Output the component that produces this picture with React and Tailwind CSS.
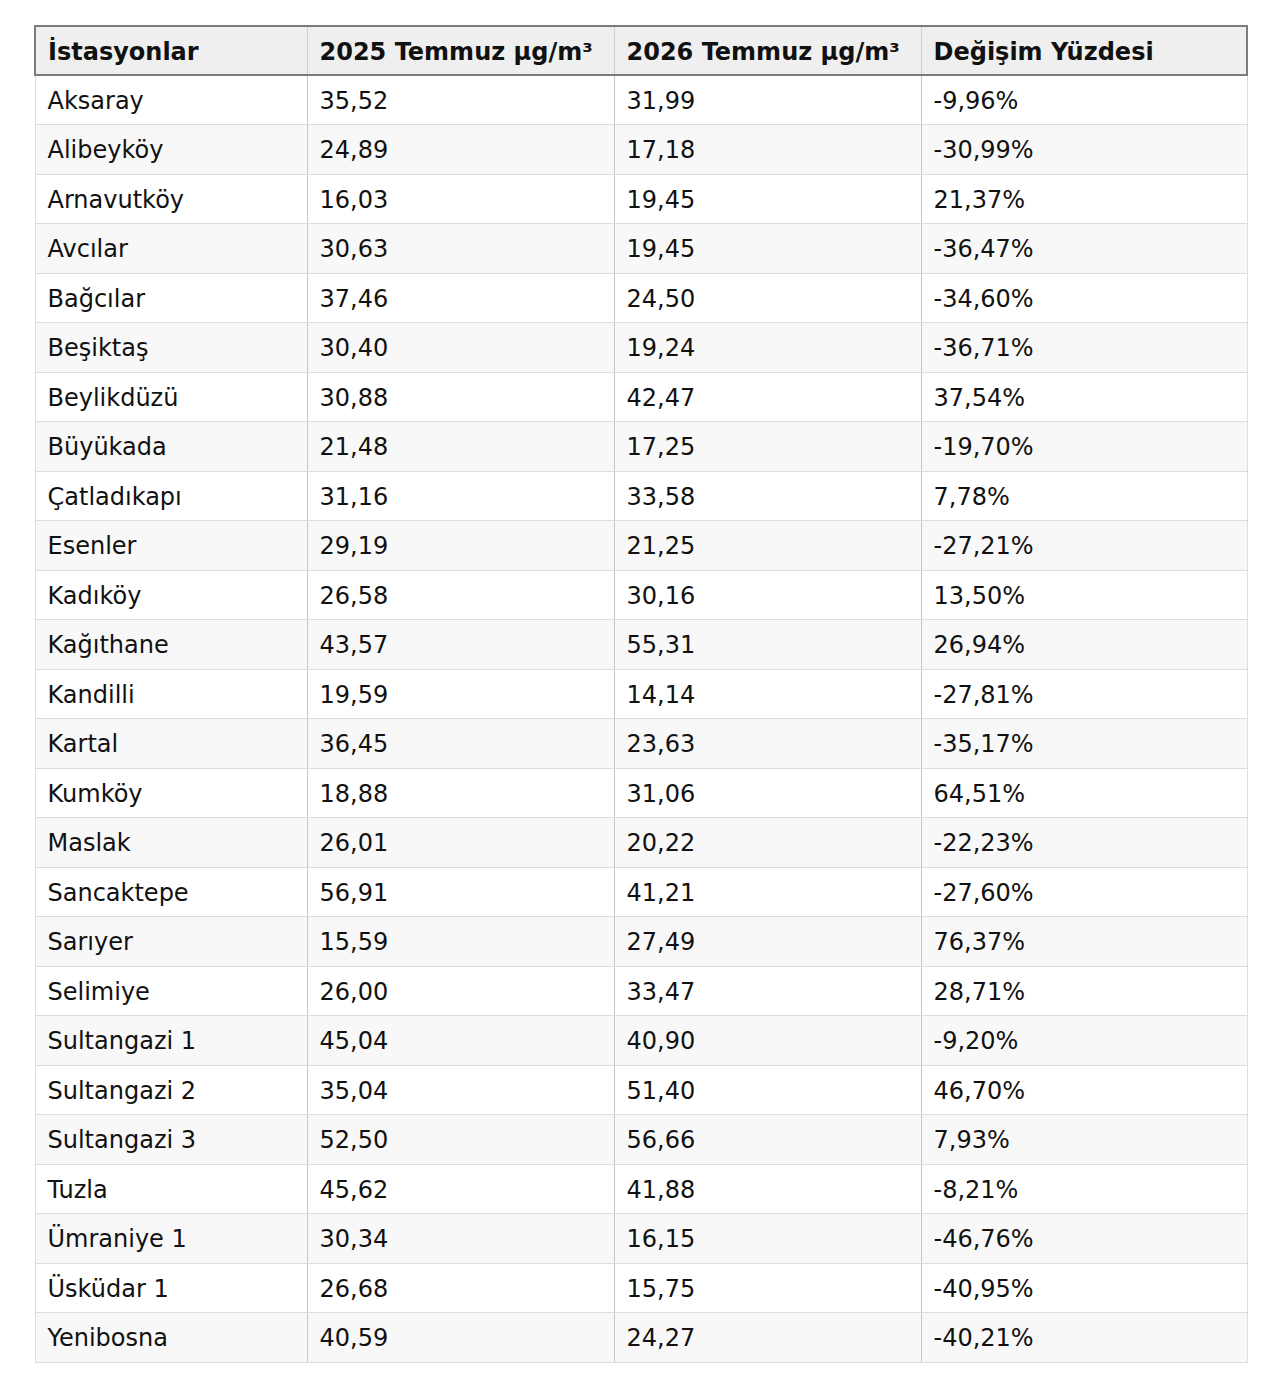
import React from "react";

const rows = [
  ["Aksaray", "35,52", "31,99", "-9,96%"],
  ["Alibeyköy", "24,89", "17,18", "-30,99%"],
  ["Arnavutköy", "16,03", "19,45", "21,37%"],
  ["Avcılar", "30,63", "19,45", "-36,47%"],
  ["Bağcılar", "37,46", "24,50", "-34,60%"],
  ["Beşiktaş", "30,40", "19,24", "-36,71%"],
  ["Beylikdüzü", "30,88", "42,47", "37,54%"],
  ["Büyükada", "21,48", "17,25", "-19,70%"],
  ["Çatladıkapı", "31,16", "33,58", "7,78%"],
  ["Esenler", "29,19", "21,25", "-27,21%"],
  ["Kadıköy", "26,58", "30,16", "13,50%"],
  ["Kağıthane", "43,57", "55,31", "26,94%"],
  ["Kandilli", "19,59", "14,14", "-27,81%"],
  ["Kartal", "36,45", "23,63", "-35,17%"],
  ["Kumköy", "18,88", "31,06", "64,51%"],
  ["Maslak", "26,01", "20,22", "-22,23%"],
  ["Sancaktepe", "56,91", "41,21", "-27,60%"],
  ["Sarıyer", "15,59", "27,49", "76,37%"],
  ["Selimiye", "26,00", "33,47", "28,71%"],
  ["Sultangazi 1", "45,04", "40,90", "-9,20%"],
  ["Sultangazi 2", "35,04", "51,40", "46,70%"],
  ["Sultangazi 3", "52,50", "56,66", "7,93%"],
  ["Tuzla", "45,62", "41,88", "-8,21%"],
  ["Ümraniye 1", "30,34", "16,15", "-46,76%"],
  ["Üsküdar 1", "26,68", "15,75", "-40,95%"],
  ["Yenibosna", "40,59", "24,27", "-40,21%"],
];

const headers = ["İstasyonlar", "2025 Temmuz µg/m³", "2026 Temmuz µg/m³", "Değişim Yüzdesi"];

export default function App() {
  return (
    <div
      className="w-[1280px] h-[1395px] bg-white pt-[25px] pl-[34px]"
      style={{ fontFamily: '"DejaVu Sans", sans-serif' }}
    >
      <table className="w-[1212px] table-fixed border-collapse text-[24px] text-[#111]">
        <colgroup>
          <col className="w-[272px]" />
          <col className="w-[307px]" />
          <col className="w-[307px]" />
          <col className="w-[326px]" />
        </colgroup>
        <thead>
          <tr className="h-[49px] bg-[#efefef]">
            {headers.map((h, i) => (
              <th
                key={i}
                className={
                  "border-y-2 border-y-[#7c7c7c] px-3 pt-[2px] pb-0 text-left font-bold " +
                  (i === 0 ? "border-l-2 border-l-[#7c7c7c] " : "border-l border-l-[#cfcfcf] ") +
                  (i === 3 ? "border-r-2 border-r-[#7c7c7c]" : "")
                }
              >
                {h}
              </th>
            ))}
          </tr>
        </thead>
        <tbody>
          {rows.map((r, ri) => (
            <tr key={ri} className={"h-[49.5px] " + (ri % 2 === 1 ? "bg-[#f8f8f8]" : "bg-white")}>
              {r.map((c, ci) => (
                <td
                  key={ci}
                  className={
                    "border-b border-b-[#dcdcdc] px-3 pt-[2px] pb-0 align-middle " +
                    (ci === 0 ? "border-l border-l-[#dedede] " : "border-l border-l-[#c6c6c6] ") +
                    (ci === 3 ? "border-r border-r-[#dedede]" : "")
                  }
                >
                  {c}
                </td>
              ))}
            </tr>
          ))}
        </tbody>
      </table>
    </div>
  );
}
